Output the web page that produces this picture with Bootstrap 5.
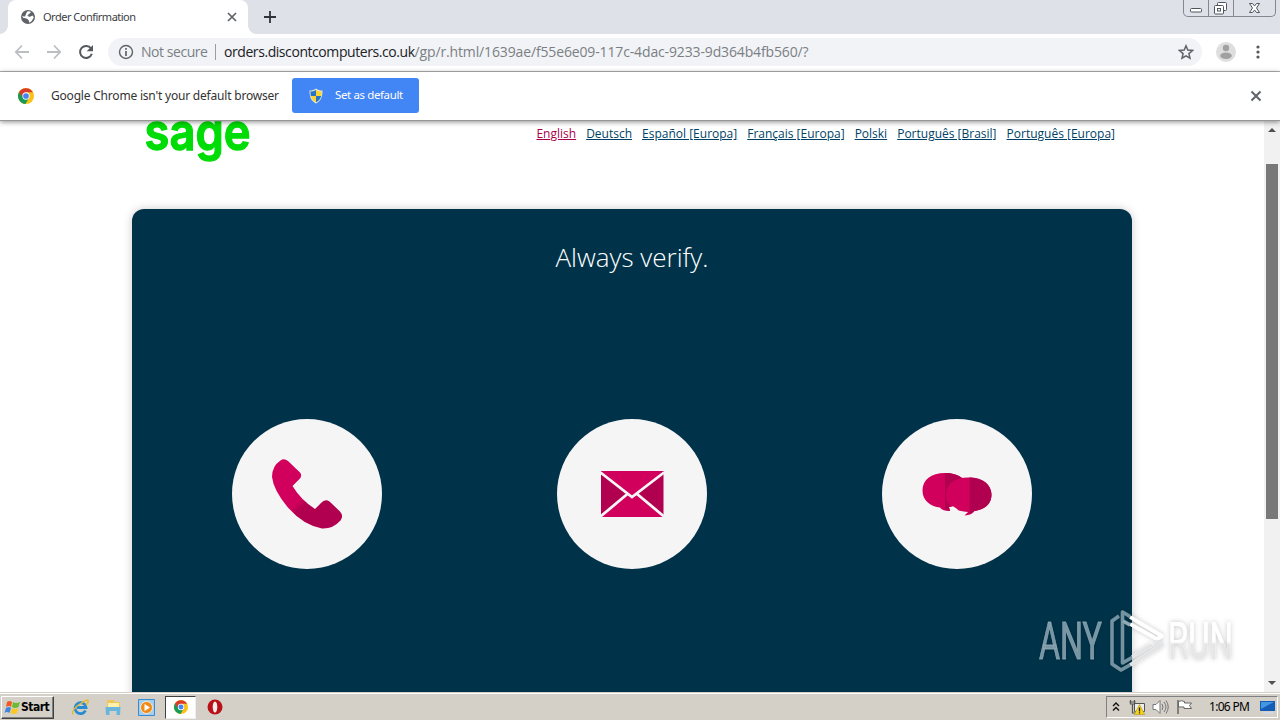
<!DOCTYPE html>
<html lang="en">
<head>
<meta charset="utf-8">
<title>Order Confirmation</title>
<link href="https://cdn.jsdelivr.net/npm/bootstrap@5.3.0/dist/css/bootstrap.min.css" rel="stylesheet">
<style>
html,body{height:100%}
body{font-family:"Open Sans","Noto Sans",sans-serif;overflow:hidden;background:#fff}
.screen{width:1280px;height:720px}
.ui{font-family:"Noto Sans","DejaVu Sans",sans-serif}
svg{display:block;flex:none}
.tabstrip{height:34px;background:#dee1e8;padding-left:8px}
.tab{width:240px;background:#fff;border-radius:8px 8px 0 0;padding:0 10px 0 12px;font-size:11px;color:#3c4043;white-space:nowrap}
.tab:before,.tab:after{content:"";position:absolute;bottom:0;width:8px;height:8px}
.tab:before{left:-8px;background:radial-gradient(circle at 0 0,transparent 7.5px,#fff 8px)}
.tab:after{right:-8px;background:radial-gradient(circle at 100% 0,transparent 7.5px,#fff 8px)}
.tab-title{margin-left:7px;letter-spacing:-.5px}
.newtab{margin:11px 0 0 16px}
.wincontrols{height:17px;margin-right:4px;border:1px solid #83878f;border-top:0;border-radius:0 0 5px 5px}
.wincontrols span{width:25px;border-right:1px solid #83878f}
.wincontrols span:last-child{width:41px;border:0}
.toolbar{height:38px;border-bottom:1px solid #b2b2b2;padding:0 14px 1px}
.omnibox{width:1094px;height:28px;background:#f1f3f6;border-radius:14px;margin-left:14px;padding:0 8px 0 10px;font-size:14px;font-weight:400;color:#7b7f84;white-space:nowrap}
.insecure{margin-left:7px;width:67px;letter-spacing:-.45px}
.vline{width:1px;height:16px;background:#999ea3;margin:0 8px 0 7px}
.url{padding-bottom:1px}
.host{color:#202124;letter-spacing:-.43px}
.urlpath{letter-spacing:-.14px}
.infobar{height:49px;border-bottom:1px solid #979797;padding:0 18px 1px;font-size:12px;color:#333;box-shadow:0 1px 5px rgba(0,0,0,.45);z-index:2;background:#fff}
.infotext{width:228px;margin-left:17px;white-space:nowrap;letter-spacing:-.2px}
.defbtn{width:127px;height:35px;background:#4285f4;border-radius:3px;margin-left:13px;padding:0 16px;font-size:11.5px;color:#fff;border:0;white-space:nowrap;letter-spacing:-.38px}
.deftext{margin-left:11px;padding-bottom:1px}
.viewport{height:571px}
.page{width:1264px}
.pagehead{height:88px;padding:0 149px 0 145px}
.langs{gap:10px;font-size:12px;padding-top:4px;white-space:nowrap}
.langs a{color:#003f66}
.langs a.current{color:#a8004a}
.panel{width:1000px;height:520px;margin:0 auto;background:#003349;border-radius:12px;box-shadow:0 0 10px rgba(0,0,0,.2)}
.panel h1{font-size:26px;font-weight:300;line-height:38px;color:#fff;margin:0;padding-top:29px}
.bubbles{padding:143px 100px 0}
.bubble{width:150px;height:150px;border-radius:50%;background:#f5f5f5}
.scroller{width:16px;background:#f1f1f1;padding:7px 2px 5px}
.thumb{width:12px;height:355px;background:#787878;margin-top:32px}
.watermark{position:absolute;left:1032px;top:484px;overflow:visible}
.taskbar{height:28px;background:#d4d0c8;border-top:1px solid #d4d0c8;box-shadow:inset 0 1px 0 #fff;padding:2px 2px 1px 1px;z-index:3}
.startbtn{width:53px;height:23px;background:#d4d0c8;border:1px solid;border-color:#fff #404040 #404040 #fff;box-shadow:inset -1px -1px #808080;font:bold 12px "DejaVu Sans Condensed","DejaVu Sans",sans-serif;color:#000;padding:0 2px;letter-spacing:-.5px}
.quick{margin-left:18px}
.active-task{width:31px;height:23px;border:1px solid;border-color:#404040 #eee #eee #404040;background:#fff;margin:0 11px 0 10px}
.tray{width:172px;height:22px;border:1px solid;border-color:#808080 #fff #fff #808080;font-size:12px;color:#000;padding:0 1px 0 5px}
.clock{margin-left:16px;letter-spacing:-.7px;white-space:nowrap}
</style>
</head>
<body>
<svg width="0" height="0" class="position-absolute">
<symbol id="chrome" viewBox="0 0 18 18"><circle cx="9" cy="9" r="9" fill="#fbc116"/><path d="M9 9 1.200 4.500A9 9 0 0 0 8.300 18L12.500 11Z" fill="#189c55"/><path d="M1.200 4.500A9 9 0 0 1 16.800 4.900H9L5.500 11Z" fill="#db3b2c"/><circle cx="9" cy="9" r="4.100" fill="#fff"/><circle cx="9" cy="9" r="3.200" fill="#4285f4"/></symbol>
</svg>
<div class="screen d-flex flex-column">
  <header class="tabstrip ui d-flex align-items-stretch">
    <div class="tab position-relative d-flex align-items-center">
      <svg width="16" height="16" viewBox="0 0 16 16"><circle cx="8" cy="8" r="7" fill="#5f6368"/><path d="M7.2 2.4 9 2.2 11 3 9.800 4.600 8.500 5 8.200 6.400 6.700 6.800 9.300 7.800 10.600 7.600 12.500 6.500 13.800 8.200 11.800 12 9.300 13.700 8.600 11 6.500 9.500 3 8.800 2.200 7.300 5 7.400 6 5Z" fill="#fff"/><path d="M6 3.500 4 5.300 5.500 6Z" fill="#5f6368"/></svg>
      <span class="tab-title">Order Confirmation</span>
      <svg class="ms-auto" width="12" height="12" viewBox="0 0 12 12"><path d="m2 2 8 8M10 2l-8 8" stroke="#5f6368" stroke-width="1.7"/></svg>
    </div>
    <svg class="newtab" width="12" height="12" viewBox="0 0 12 12"><path d="M6 0v12M0 6h12" stroke="#30343a" stroke-width="1.8"/></svg>
    <div class="wincontrols ms-auto d-flex align-items-center">
      <span><svg width="24" height="17" viewBox="0 0 24 17"><rect x="6.500" y="8.500" width="11" height="3.500" rx="1" fill="#fff" stroke="#50545c"/></svg></span>
      <span><svg width="24" height="17" viewBox="0 0 24 17"><g fill="#fff" stroke="#50545c"><rect x="8.500" y="2.500" width="9" height="8" rx="1"/><rect x="5.500" y="5.500" width="9" height="8.500" rx="1"/><rect x="8.500" y="8.500" width="3" height="2.500"/></g></svg></span>
      <span><svg width="40" height="17" viewBox="0 0 40 17"><path d="M15.500 3.500h3l2 2.500 2-2.500h3L22.500 8l3 4.500h-3l-2-2.500-2 2.500h-3L18.500 8Z" fill="#fff" stroke="#50545c"/></svg></span>
    </div>
  </header>

  <nav class="toolbar d-flex align-items-center">
    <svg width="16" height="16" viewBox="0 0 16 16"><path d="M15 8H2M8 1.500 1.800 8 8 14.500" fill="none" stroke="#bcbec1" stroke-width="1.800"/></svg>
    <svg width="16" height="16" viewBox="0 0 16 16" class="ms-3"><path d="M1 8h13M8 1.500 14.200 8 8 14.500" fill="none" stroke="#bcbec1" stroke-width="1.800"/></svg>
    <svg width="16" height="16" viewBox="0 0 16 16" class="ms-3"><path d="M13 4.500A6 6 0 1 0 13.800 9.700" fill="none" stroke="#55595e" stroke-width="2"/><path d="M15 1v6.300H8.700Z" fill="#55595e"/></svg>
    <div class="omnibox d-flex align-items-center">
      <svg width="16" height="16" viewBox="0 0 16 16"><circle cx="8" cy="8" r="6.500" fill="none" stroke="#5f6368" stroke-width="1.400"/><path d="M8 7v5M8 4v1.700" stroke="#5f6368" stroke-width="1.700"/></svg>
      <span class="insecure url">Not secure</span><span class="vline"></span>
      <span class="url"><span class="host">orders.discontcomputers.co.uk</span><span class="urlpath">/gp/r.html/1639ae/f55e6e09-117c-4dac-9233-9d364b4fb560/?</span></span>
      <svg class="ms-auto" width="16" height="16" viewBox="0 0 16 16"><path d="m8 1.800 1.800 4.300 4.700.4-3.600 3.100 1.100 4.600L8 11.800l-4 2.400 1.100-4.600-3.600-3.100 4.700-.4Z" fill="none" stroke="#5f6368" stroke-width="1.500"/></svg>
    </div>
    <svg width="20" height="20" viewBox="0 0 20 20" style="margin-left:14px"><circle cx="10" cy="10" r="10" fill="#dedede"/><circle cx="10" cy="6" r="3.200" fill="#a0a0a0"/><ellipse cx="10" cy="13.700" rx="5.800" ry="3.200" fill="#a0a0a0"/></svg>
    <svg class="ms-auto" width="16" height="16" viewBox="0 0 16 16"><g fill="#55595e"><circle cx="8" cy="3" r="1.600"/><circle cx="8" cy="8" r="1.600"/><circle cx="8" cy="13" r="1.600"/></g></svg>
  </nav>

  <div class="infobar ui position-relative d-flex align-items-center">
    <svg width="16" height="16"><use href="#chrome"/></svg>
    <span class="infotext">Google Chrome isn't your default browser</span>
    <button class="defbtn d-flex align-items-center">
      <svg width="16" height="16" viewBox="0 0 16 16"><path d="M8 .5C6 2 4 2.500 1.500 2.500 1.500 9 3 13 8 15.500 13 13 14.500 9 14.500 2.500 12 2.500 10 2 8 .5Z" fill="#e3e6d4"/><path d="M8 2v6H2.800Q2.400 6 2.500 3.600 5.500 3.500 8 2Z" fill="#2674c6"/><path d="M8 2v6h5.200q.4-2 .3-4.400Q10.500 3.500 8 2Z" fill="#fbd332"/><path d="M8 14.300V8H2.800Q4 12.400 8 14.300Z" fill="#fbd332"/><path d="M8 14.300V8h5.200Q12 12.400 8 14.300Z" fill="#2674c6"/></svg>
      <span class="deftext">Set as default</span>
    </button>
    <svg class="ms-auto" width="12" height="12" viewBox="0 0 12 12"><path d="m1.500 1.500 9 9M10.500 1.500l-9 9" stroke="#5f6368" stroke-width="2"/></svg>
  </div>

  <main class="viewport position-relative d-flex overflow-hidden">
    <div class="page">
      <div class="pagehead d-flex justify-content-between align-items-start">
        <svg width="108" height="50" viewBox="0 0 108 50"><text x="-.5" y="29" font-family="Inter" font-weight="600" font-size="51" fill="#00dc06" stroke="#00dc06" stroke-width="1.300" textLength="106" lengthAdjust="spacingAndGlyphs">sage</text></svg>
        <div class="langs d-flex"><a class="current" href="#">English</a><a href="#">Deutsch</a><a href="#">Español [Europa]</a><a href="#">Français [Europa]</a><a href="#">Polski</a><a href="#">Português [Brasil]</a><a href="#">Português [Europa]</a></div>
      </div>
      <section class="panel">
        <h1 class="text-center">Always verify.</h1>
        <div class="bubbles d-flex justify-content-between">
          <div class="bubble"><svg width="150" height="150" viewBox="0 0 150 150"><defs><linearGradient id="ph" x1="0" y1="0" x2="1" y2="1"><stop offset=".49" stop-color="#d0005c"/><stop offset=".56" stop-color="#b20050"/></linearGradient></defs><path d="M48.500 41.500Q52 39 56 42L68 53.500Q71 57 66.500 61L60.500 67Q69 81 83 90L89 84Q93 79.500 97.500 82.500L108 92.500Q112 97 108.500 101.500 101 110 90 109.500 71 106 55.500 88 41.500 71 40 58 40 47 48.500 41.500Z" fill="url(#ph)"/></svg></div>
          <div class="bubble"><svg width="150" height="150" viewBox="0 0 150 150"><path d="M44 52h62.500v46H44Z" fill="#b20050"/><path d="M44 52h62.500L75.500 77ZM44 98l29-23h5l28.500 23Z" fill="#d0005c"/><path d="M43.500 53.500 75 78l32-24.500M43.500 97.500 71 74.500M107 97.500 79.500 74.500" fill="none" stroke="#f8f5f7" stroke-width="2.800"/></svg></div>
          <div class="bubble"><svg width="150" height="150" viewBox="0 0 150 150"><path d="M63 54C49 54 40.500 61 40.500 71.500S49 87.500 58 88.500Q60 92 68 92L67 88C79 87 86 81 86 71S77 54 63 54Z" fill="#d0005c"/><path d="M63 54C77 54 86 61 86 71S79 87 67 88L68 92 63 91Z" fill="#b20050"/><path d="M86.500 58.500C72 58.500 64 65.500 64 75.500 64 86 72 92 86 93L82.500 96.500Q90 96 92.500 92C103 90.500 109.500 84 109.500 75.500S101 58.500 86.500 58.500Z" fill="#d0005c"/><path d="M87.500 58.500C101 58.500 109.500 65.500 109.500 75.500S103 90.500 92.500 92L87.500 95Z" fill="#b20050"/><path d="M67 88.500 71 87.300 76 90.500 72 92Z" fill="#f5f5f5"/></svg></div>
        </div>
      </section>
    </div>
    <div class="scroller">
      <svg width="12" height="4" viewBox="0 0 12 4"><path d="M2 4 6 0l4 4Z" fill="#505050"/></svg>
      <div class="thumb"></div>
      <svg width="12" height="4" viewBox="0 0 12 4" style="margin-top:162px"><path d="M2 0 6 4l4-4Z" fill="#505050"/></svg>
    </div>
    <svg class="watermark" width="208" height="76" viewBox="0 0 208 76">
      <defs><filter id="sh" x="-10%" y="-20%" width="120%" height="140%"><feDropShadow dx="0" dy="0" stdDeviation="2.500" flood-color="#000" flood-opacity=".25"/></filter>
      <linearGradient id="wg" x1="0" x2="0" y1="0" y2="1"><stop offset=".5" stop-color="#fff"/><stop offset=".55" stop-color="#e6e6e6"/></linearGradient></defs>
      <g filter="url(#sh)">
        <text x="7" y="54" font-family="Roboto" font-size="51" font-weight="400" fill="#9cb4c0" stroke="#9cb4c0" stroke-width=".9" stroke-opacity=".7" fill-opacity=".75" textLength="63" lengthAdjust="spacingAndGlyphs">ANY</text>
        <text x="136" y="54" font-family="Roboto" font-size="51" font-weight="400" fill="url(#wg)" textLength="65" lengthAdjust="spacingAndGlyphs">RUN</text>
        <g fill="none" stroke-width="3.500" stroke-linejoin="round"><path d="M87 11 80 16V59l9 6 9-5" stroke="#90a9b6" stroke-opacity=".8"/><path d="M98 11.500 90.500 7v51L100 52.500" stroke="#90a9b6" stroke-opacity=".8"/><path d="M98 12 130 31l-5 3-27-15" stroke="#fff"/><path d="M98 20l-7-4" stroke="#90a9b6"/><path d="M100 52l20-12M98 60l32-20-6-4" stroke="#e2e4e5"/></g>
      </g>
    </svg>
  </main>

  <footer class="taskbar ui position-relative d-flex align-items-center">
    <div class="startbtn d-flex align-items-center"><svg width="17" height="17" viewBox="0 0 17 17"><path d="M3 3Q6 1 8 3L7 8Q5 6 2 8Z" fill="#f05a22"/><path d="M9 3q3 2 7 0l-1.500 5Q11 10 8 8Z" fill="#6cba34"/><path d="M2 9q3-2 5 0l-1.500 5Q3 12 .5 14Z" fill="#3e87dd"/><path d="M8 9q3 2 6.500 0L13 14q-3 2-6.500 0Z" fill="#fbc726"/></svg><span>Start</span></div>
    <div class="quick d-flex align-items-center">
      <svg width="17" height="17" viewBox="0 0 17 17"><path d="M13.500 11.500A5.500 5.500 0 1 1 14 8.500H5" fill="none" stroke="#268bd3" stroke-width="2.800"/><path d="M1 15.500Q-1 11 8 5T16 2Q16.500 4 14 6" fill="none" stroke="#e6ba35" stroke-width="1.500"/></svg>
      <svg width="18" height="17" viewBox="0 0 18 17" style="margin-left:15px"><path d="M3 1h7l1 2h5v9H3Z" fill="#eec757"/><path d="M4 4h11v5H4Z" fill="#fff0ac"/><path d="M1.500 8h15l-.5 8h-3.500v-4h-7v4H2Z" fill="#69b5dc"/></svg>
      <svg width="17" height="17" viewBox="0 0 17 17" style="margin-left:16px"><path d="M.5.500h16v16H.5Z" fill="#a5cdee" stroke="#378bd0"/><circle cx="8.500" cy="8.500" r="6" fill="#f18b18" stroke="#fff" stroke-width=".7"/><path d="m6.500 5 5.500 3.500-5.500 3.500Z" fill="#fff"/></svg>
      <div class="active-task d-flex align-items-center justify-content-center"><svg width="14" height="14"><use href="#chrome"/></svg></div>
      <svg width="16" height="16" viewBox="0 0 16 16"><circle cx="8" cy="8" r="7.500" fill="#b81118"/><ellipse cx="8" cy="8" rx="2.300" ry="5.500" fill="#f6eded"/></svg>
    </div>
    <div class="tray ms-auto d-flex align-items-center">
      <svg width="8" height="12" viewBox="0 0 8 12"><path d="m1 5 3-3 3 3M1 9.500l3-3 3 3" fill="none" stroke="#111" stroke-width="1.400"/></svg>
      <svg width="16" height="16" viewBox="0 0 16 16" style="margin-left:9px"><path d="M5.500 4.500h10v8h-10Z" fill="#eee" stroke="#555"/><path d="M1.500 1v4h4V1M3.500 5v9h4M.5 3h6" fill="none" stroke="#555" stroke-width="1.200"/><path d="m10.500 5.500 5.200 10H5.300Z" fill="#f7d51d" stroke="#b6940e" stroke-width=".6"/><path d="M10.500 8.500v4M10.500 13.300v1.200" stroke="#222" stroke-width="1.300"/></svg>
      <svg width="17" height="16" viewBox="0 0 17 16" style="margin-left:7px"><path d="M1 5.500h3l4-4v13l-4-4H1Z" fill="#fff" stroke="#777"/><path d="M10 5q2 3 0 6M12 3q4 5 0 10M14 1.500q4.500 6.500 0 13" fill="none" stroke="#777"/></svg>
      <svg width="17" height="16" viewBox="0 0 17 16" style="margin-left:7px"><path d="M2 1v14" stroke="#555" stroke-width="1.300"/><path d="M2.500 2.500q3-1.500 6 0v1.500h7l-2 2.500 2 3H8V8H2.500Z" fill="#fff" stroke="#666"/></svg>
      <span class="clock">1:06 PM</span>
      <svg class="ms-auto" width="17" height="16" viewBox="0 0 17 16"><path d="M1 2h15v10H1Z" fill="#145db6"/><path d="M2 3h13L2 10Z" fill="#4396df"/><path d="M4 13h10v2H4Z" fill="#cdd9e6"/></svg>
    </div>
  </footer>
</div>
<script src="https://cdn.jsdelivr.net/npm/bootstrap@5.3.0/dist/js/bootstrap.bundle.min.js"></script>
</body>
</html>
